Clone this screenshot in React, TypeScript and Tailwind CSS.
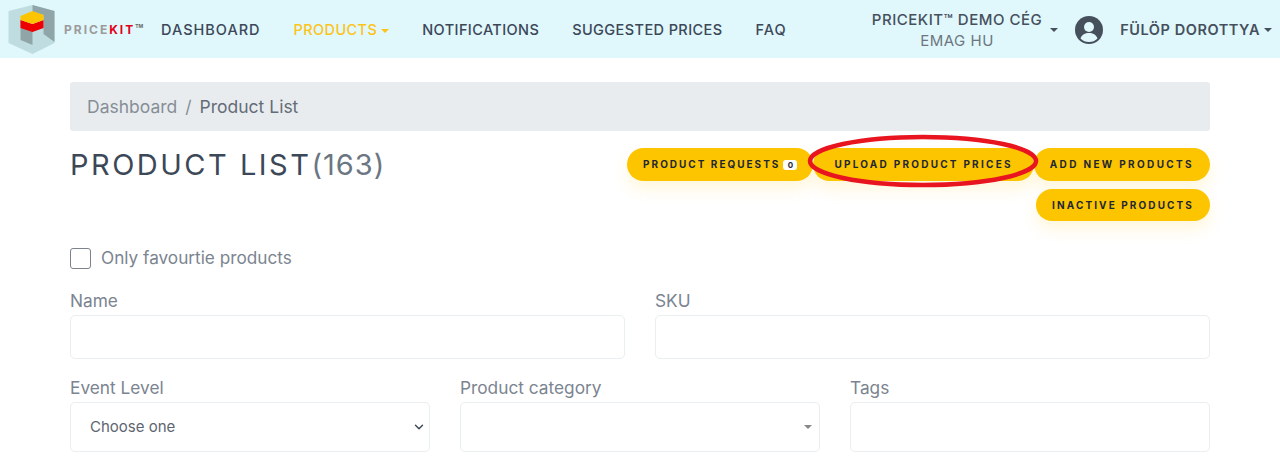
import { ChevronDown } from "lucide-react";

const Caret = ({ className = "" }: { className?: string }) => (
  <span className={`inline-block border-x-[4px] border-t-[4px] border-x-transparent ${className}`}></span>
);

const Logo = () => (
  <svg width="48" height="50" viewBox="8 5 47 50" className="shrink-0">
    <polygon points="32,5 54,11 54,43 32,54 8,43 8,11" fill="#bfdde1" />
    <polygon points="32,5 54,11 54,42 43,34 43,15 32,12" fill="#8fa5a8" />
    <polygon points="20,20 32,25 32,45 20,40" fill="#8fa5a8" />
    <polygon points="20,20 32,24 43,20 43,28 32,32 20,28" fill="#ee0000" />
    <polygon points="20,16 32,11 43,15 43,20 32,24 20,20" fill="#fdc500" />
  </svg>
);

const NavLink = ({ label, track, active }: { label: string; track: string; active?: boolean }) => (
  <a className={`font-medium text-[14.5px] ${track} ${active ? "text-[#fcc419]" : "text-[#3c4858]"}`}>
    {label}
    {active && <Caret className="border-t-[#fcc419] ml-1 align-middle" />}
  </a>
);

const ActionButton = ({ label, track, badge, wide }: { label: string; track: string; badge?: string; wide?: boolean }) => (
  <button className={`h-[33px] rounded-full bg-[#fdc500] text-[#1f2733] text-[10px] font-bold whitespace-nowrap shadow-[0_8px_16px_rgba(253,197,0,0.15)] flex items-center ${track} ${wide ? "px-[21px]" : "px-4"}`}>
    {label}
    {badge && (
      <span className="ml-[3px] w-[14px] h-[10px] bg-white rounded-[3px] text-[8px] tracking-normal leading-[10px] text-center">
        {badge}
      </span>
    )}
  </button>
);

const Field = ({ label, tall, children }: { label: string; tall?: boolean; children?: React.ReactNode }) => (
  <div className="flex flex-col">
    <label className="text-[17.3px] leading-6 text-[#7b8490] mb-[2px]">{label}</label>
    <div className={`relative border border-[#e9eff0] rounded-[5px] bg-white flex items-center px-[19px] ${tall ? "h-[50px]" : "h-[44px]"}`}>
      {children}
    </div>
  </div>
);

const App = () => {
  return (
    <div className="w-[1280px] h-[462px] overflow-hidden bg-white relative font-['Inter',sans-serif]">
      <nav className="h-[58px] bg-[#e0f7fc] flex items-center pl-2 pr-[8px] pt-[2px]">
        <Logo />
        <div className="ml-[8px] w-[97px] text-[12px] font-bold tracking-[2px] flex">
          <span className="text-[#9b9b9b]">PRICE</span>
          <span className="text-[#e2001a]">KIT</span>
          <span className="text-[5px] text-[#666] tracking-normal leading-[10px]">TM</span>
        </div>
        <div className="flex items-center gap-[33px]">
          <NavLink label="DASHBOARD" track="tracking-[1px]" />
          <NavLink label="PRODUCTS" track="tracking-[0.4px]" active />
          <NavLink label="NOTIFICATIONS" track="tracking-[0.4px]" />
          <NavLink label="SUGGESTED PRICES" track="tracking-[0.4px]" />
          <NavLink label="FAQ" track="tracking-[1px]" />
        </div>
        <div className="ml-auto flex items-center">
          <div className="text-center text-[15px] leading-[21px] font-medium text-[#46505c] tracking-[0.5px]">
            <div>PRICEKIT™ DEMO CÉG</div>
            <div className="font-normal text-[#6d7680]">EMAG HU</div>
          </div>
          <Caret className="border-t-[#46505c] ml-[8px]" />
          <svg width="28" height="28" viewBox="0 0 28 28" className="ml-[17px]">
            <circle cx="14" cy="14" r="14" fill="#46505c" />
            <circle cx="14" cy="11" r="5" fill="#e0f7fc" />
            <path d="M5.5 22.5c1.5-4 4.5-5.5 8.5-5.500s7 1.500 8.500 5.500A12 12 0 0 1 14 26a12 12 0 0 1-8.500-3.500z" fill="#e0f7fc" />
          </svg>
          <span className="ml-[17px] text-[14.5px] font-semibold text-[#46505c] tracking-[0.56px]">FÜLÖP DOROTTYA</span>
          <Caret className="border-t-[#46505c] ml-[4px]" />
        </div>
      </nav>

      <main className="w-[1140px] mx-auto pt-6">
        <div className="h-[49px] bg-[#e9ecef] rounded-[3px] flex items-center px-[17px] text-[17.5px] pt-[1px]">
          <span className="text-[#868e96]">Dashboard</span>
          <span className="text-[#868e96] px-2">/</span>
          <span className="text-[#646d77]">Product List</span>
        </div>

        <div className="flex justify-between mt-[17px] h-[73px]">
          <h1 className="text-[29px] leading-[34px] tracking-[2.5px] text-[#3c4858] font-normal">
            PRODUCT LIST<span className="text-[#6b7683] tracking-[1px]">(163)</span>
          </h1>
          <div className="flex flex-col items-end gap-2">
            <div className="flex items-center">
              <ActionButton label="PRODUCT REQUESTS" track="tracking-[2px]" badge="0" />
              <ActionButton label="UPLOAD PRODUCT PRICES" track="tracking-[2.25px]" wide />
              <ActionButton label="ADD NEW PRODUCTS" track="tracking-[2.35px]" />
            </div>
            <ActionButton label="INACTIVE PRODUCTS" track="tracking-[2.1px]" />
          </div>
        </div>

        <div className="flex items-center mt-[26px] h-[22px]">
          <span className="w-[21px] h-[21px] border border-[#7d838a] rounded-[3px] bg-white"></span>
          <span className="ml-[10px] text-[17.2px] text-[#7b8490]">Only favourtie products</span>
        </div>

        <div className="grid grid-cols-2 gap-x-[30px] mt-[20px]">
          <Field label="Name" />
          <Field label="SKU" />
        </div>

        <div className="grid grid-cols-3 gap-x-[30px] mt-[17px]">
          <Field label="Event Level" tall>
            <span className="text-[15px] text-[#5d6670] pt-[1px]">Choose one</span>
            <ChevronDown size={14} strokeWidth={2.5} className="absolute right-[3px] text-[#3c4858]" />
          </Field>
          <Field label="Product category" tall>
            <Caret className="absolute right-[7px] border-t-[#888]" />
          </Field>
          <Field label="Tags" tall />
        </div>
      </main>

      {/* red marker drawn on top of the screenshot */}
      <svg className="absolute left-[805px] top-[132px] pointer-events-none" width="236" height="58" viewBox="0 0 236 58">
        <ellipse cx="118" cy="29" rx="113" ry="24" fill="none" stroke="#e8141f" strokeWidth="4.500" />
      </svg>
    </div>
  );
};

export default App;
